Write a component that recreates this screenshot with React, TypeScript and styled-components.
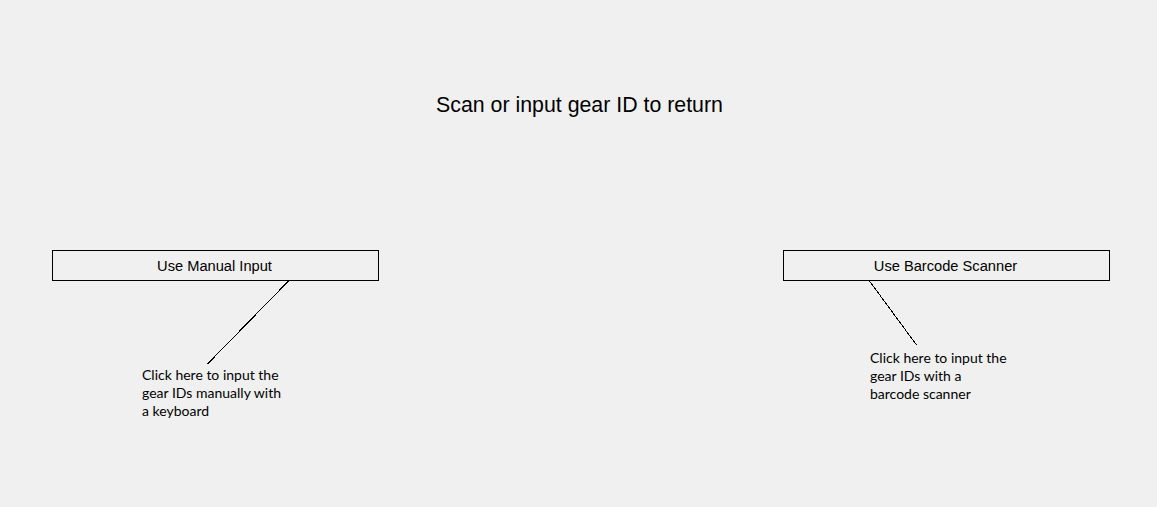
import React from "react";
import styled, { createGlobalStyle } from "styled-components";

const GlobalStyle = createGlobalStyle`
  html, body {
    margin: 0;
    padding: 0;
    background: #f0f0f0;
  }
  body {
    font-family: "Liberation Sans", Arial, sans-serif;
    color: #000;
  }
`;

const Page = styled.div`
  width: 1157px;
  height: 507px;
  box-sizing: border-box;
  padding-top: 93px;
  overflow: hidden;
`;

const Title = styled.h1`
  margin: 0;
  font-family: "Liberation Sans", Arial, sans-serif;
  font-weight: normal;
  font-size: 21.33px;
  line-height: 24px;
  text-align: center;
  padding-left: 2px;
`;

const Row = styled.div`
  display: flex;
  justify-content: space-between;
  margin-top: 133px;
  padding: 0 47px 0 52px;
`;

const Column = styled.div`
  width: 327px;
  display: flex;
  flex-direction: column;
`;

const ModeButton = styled.button`
  box-sizing: border-box;
  width: 327px;
  height: 31px;
  margin: 0;
  padding: 1px 2px 0 0;
  border: 1px solid #000;
  background: transparent;
  font-family: "Liberation Sans", Arial, sans-serif;
  font-size: 14.67px;
  color: #000;
  cursor: pointer;
`;

const Leader = styled.svg`
  display: block;
  overflow: visible;
`;

const Note = styled.p<{ $indent: number; $top: number }>`
  margin: ${(p) => p.$top}px 0 0 ${(p) => p.$indent}px;
  font-family: Lato, "Open Sans", sans-serif;
  font-size: 14px;
  line-height: 18px;
  color: #000;
  width: 180px;
`;

type LineProps = { x1: number; x2: number; height: number };

const LeaderLine = ({ x1, x2, height }: LineProps) => (
  <Leader width={327} height={height}>
    <line
      x1={x1 + 0.5}
      y1={0}
      x2={x2 + 0.5}
      y2={height}
      stroke="#000"
      strokeWidth={1}
      shapeRendering="crispEdges"
    />
  </Leader>
);

export default function App() {
  return (
    <>
      <GlobalStyle />
      <Page>
        <Title>Scan or input gear ID to return</Title>
        <Row>
          <Column>
            <ModeButton>Use Manual Input</ModeButton>
            <LeaderLine x1={236} x2={155} height={83} />
            <Note $indent={90} $top={2}>
              Click here to input the
              <br />
              gear IDs manually with
              <br />a keyboard
            </Note>
          </Column>
          <Column>
            <ModeButton>Use Barcode Scanner</ModeButton>
            <LeaderLine x1={86} x2={133} height={64} />
            <Note $indent={87} $top={4}>
              Click here to input the
              <br />
              gear IDs with a
              <br />
              barcode scanner
            </Note>
          </Column>
        </Row>
      </Page>
    </>
  );
}
